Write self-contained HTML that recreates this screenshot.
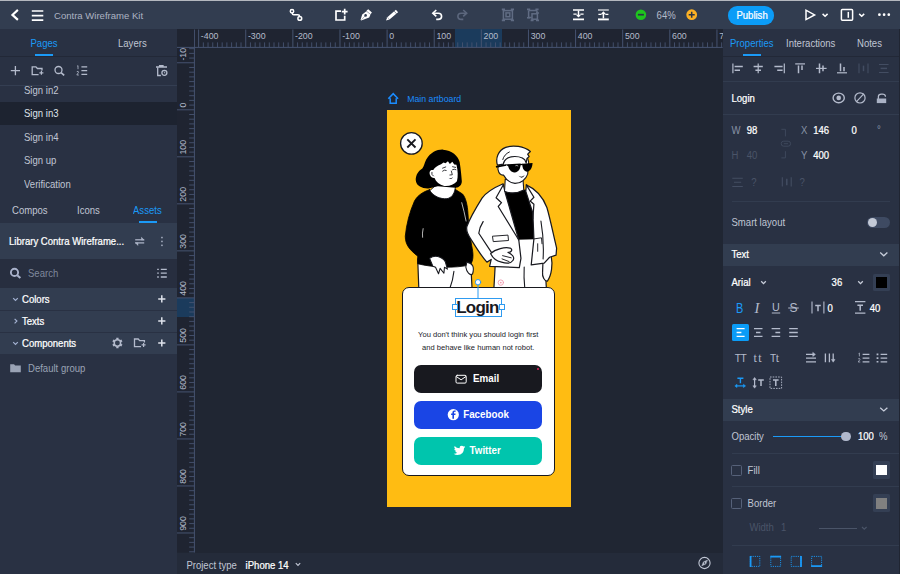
<!DOCTYPE html>
<html>
<head>
<meta charset="utf-8">
<title>Contra Wireframe Kit</title>
<style>
*{box-sizing:border-box;margin:0;padding:0}
html,body{width:900px;height:574px;overflow:hidden;background:#202633}
body{position:relative;font-family:"Liberation Sans",Arial,sans-serif;font-size:9.55px;color:#c0c6d4;line-height:1}
.abs{position:absolute}
.t{position:absolute;white-space:nowrap;line-height:12px;height:12px;margin-top:-5.25px;transform:scaleY(1.13);transform-origin:0 9.3px}
.w{color:#fff;-webkit-text-stroke:0.22px #fff}
.b{color:#1b9af7}
.dim{color:#4a5468}
.g{color:#8791a5}
svg{position:absolute;overflow:visible}
#top{left:0;top:0;width:900px;height:29px;background:#323d50;border-top:1px solid #b4b8bf}
#left{left:0;top:29px;width:177px;height:545px;background:#293143}
#right{left:722.7px;top:29px;width:177.3px;height:545px;background:#293143}
#canvas{left:177px;top:29px;width:545.7px;height:523.5px;background:#202633;overflow:hidden}
#bottom{left:177px;top:552.5px;width:545.7px;height:21.5px;background:#242b3a}
.hl{position:absolute;background:#323d50}
.sep{position:absolute;height:1px;background:#323c4f}
.sw{position:absolute;width:17.6px;height:17.4px;background:#343f54;border-radius:1.5px}
.sw i{position:absolute;left:3.6px;top:3.4px;width:10.8px;height:10.8px;display:block}
.cb{position:absolute;width:10.6px;height:10.6px;border:1px solid #566179;border-radius:1.5px}
/* artboard */
#ab{position:absolute;left:386.8px;top:109.6px;width:184.2px;height:397.2px;background:#ffbc12}
#card{position:absolute;left:401.5px;top:286.5px;width:153.5px;height:189px;background:#fff;border:1px solid #18191f;border-radius:7px}
.btn{position:absolute;left:413.6px;width:128.6px;height:27.8px;border-radius:7px}
.bt{position:absolute;white-space:nowrap;font-weight:700;color:#fff;font-size:9.8px;letter-spacing:0;line-height:12px;height:12px;margin-top:-5.6px;transform:scaleY(1.08);transform-origin:0 9.4px}
.desc{position:absolute;left:401.5px;width:153.5px;text-align:center;font-size:7.55px;letter-spacing:0.01px;color:#18191f;line-height:10px;height:10px;margin-top:-5px;white-space:nowrap}
.rl{font-family:"Liberation Sans",Arial,sans-serif;font-size:8.8px;fill:#b4bbcb}
</style>
</head>
<body>
<!-- ===== canvas ===== -->
<div id="canvas" class="abs"></div>
<!-- artboard -->
<span class="t" style="left:407.2px;top:98.4px;color:#1a8cff;font-size:8.75px">Main artboard</span>
<div id="ab"></div>
<!-- woman body: frame 333x574 maps to source (395,140)-(485,295) -->
<svg class="abs" style="left:395px;top:140px" width="90" height="155.1" viewBox="0 0 333 574" stroke-linecap="round" stroke-linejoin="round">
<path d="M84 440L280 450L285 548H88Z" fill="#fff" stroke="#18191f" stroke-width="4.5"/>
<path d="M218 486Q214 520 204 546" fill="none" stroke="#18191f" stroke-width="4"/>
<path d="M128 184C104 192 84 204 72 226C54 266 42 312 38 356C38 388 54 406 84 430L84 458C140 472 222 476 278 462C292 446 290 420 284 392C276 350 272 310 270 272C268 240 262 214 250 200L222 182C205 222 150 218 128 184Z" fill="#000" stroke="#000" stroke-width="3"/>
<path d="M247 232Q256 264 263 300" fill="none" stroke="#fff" stroke-width="2.6"/>
<path d="M104 328Q100 345 102 360" fill="none" stroke="#fff" stroke-width="2.6"/>
<path d="M128 438C146 424 172 430 186 450L194 478L183 471L181 493L167 475L161 495L150 471L140 467Z" fill="#fff" stroke="#18191f" stroke-width="4"/>
<path d="M266 452C287 456 295 470 287 496C277 503 265 490 262 470Z" fill="#fff" stroke="#18191f" stroke-width="4"/>
</svg>
<!-- woman head: frame 492x574 maps to source (415,145)-(475,215) -->
<svg class="abs" style="left:415px;top:145px" width="60" height="70" viewBox="0 0 492 574" stroke-linecap="round" stroke-linejoin="round">
<!-- neck -->
<path d="M180 320L122 374C150 420 210 446 262 440C300 434 322 400 328 362L336 330Z" fill="#fff" stroke="#18191f" stroke-width="8"/>
<!-- hair -->
<path d="M230 38C180 36 130 60 92 118C76 150 74 176 60 192C20 216 0 260 8 300C16 338 60 358 110 356L188 338L330 350C360 352 384 330 384 298C380 250 376 200 366 140C356 90 300 42 230 38Z" fill="#000"/>
<!-- face -->
<path d="M214 158C180 170 158 190 150 206C128 200 114 218 122 244C130 266 146 272 160 270C172 300 200 326 240 336C280 340 320 326 344 298C354 260 352 210 340 162L322 160L306 138L286 156L270 134L250 150L234 144Z" fill="#fff"/>
<g fill="none" stroke="#18191f" stroke-width="7">
<path d="M226 190L252 180M308 178L334 184"/>
<path d="M226 214Q240 200 256 208M308 202Q322 194 336 202"/>
<path d="M298 214L306 244L286 246"/>
<path d="M138 224Q132 244 150 254"/>
</g>
<path d="M274 268Q292 280 312 262Q298 294 274 268Z" fill="#18191f"/>
</svg>
<!-- man body: frame 444x574 maps to source (455,140)-(575,295) -->
<svg class="abs" style="left:455px;top:140px" width="120" height="155.1" viewBox="0 0 444 574" stroke-linecap="round" stroke-linejoin="round">
<!-- pants -->
<path d="M150 440L232 360L292 360L332 440L338 548H144Z" fill="#fff" stroke="#18191f" stroke-width="4.5"/>
<path d="M256 470Q254 510 258 546" fill="none" stroke="#18191f" stroke-width="4"/>
<!-- shirt -->
<path d="M176 190L268 184L296 270L298 366L226 368L204 290Z" fill="#000" stroke="#000" stroke-width="2"/>
<!-- right hand -->
<path d="M326 436L356 430C362 460 358 500 342 522C332 524 322 506 324 490Z" fill="#fff" stroke="#18191f" stroke-width="4.5"/>
<!-- right arm + right panel -->
<path d="M264 166C300 182 326 212 340 250C352 290 366 360 376 400L374 426L350 434L330 456L282 462L292 366L288 270L262 190Z" fill="#fff" stroke="#18191f" stroke-width="4.5"/>
<path d="M318 300Q330 370 326 440" fill="none" stroke="#18191f" stroke-width="4"/>
<!-- left arm + left panel -->
<path d="M178 162C150 174 120 188 100 215C75 255 52 298 44 320C40 336 46 348 58 366C78 398 96 428 118 452L134 442L128 468L238 472L244 438L236 370L186 196Z" fill="#fff" stroke="#18191f" stroke-width="4.5"/>
<!-- lapels -->
<path d="M180 164L152 214L172 232L160 246L236 370" fill="none" stroke="#18191f" stroke-width="4.5"/>
<path d="M264 166L292 212L278 226L292 238L288 290" fill="none" stroke="#18191f" stroke-width="4.5"/>
<!-- inner arm line -->
<path d="M104 302Q90 324 88 345L136 418" fill="none" stroke="#18191f" stroke-width="4.5"/>
<!-- pockets -->
<path d="M140 356L196 352L198 372L143 376Z" fill="#fff" stroke="#18191f" stroke-width="3.5"/>
<path d="M293 366L320 362L322 384M306 384V412" fill="none" stroke="#18191f" stroke-width="3.5"/>
<!-- left hand -->
<path d="M132 420C150 402 185 396 204 400C216 406 208 416 196 416C214 424 222 436 214 446C206 458 190 458 172 452C156 448 140 440 132 420Z" fill="#fff" stroke="#18191f" stroke-width="4.5"/>
<path d="M176 428L208 436M174 440L200 450" fill="none" stroke="#18191f" stroke-width="3.5"/>
</svg>
<!-- man head: frame 492x574 maps to source (485,140)-(545,210) -->
<svg class="abs" style="left:485px;top:140px" width="60" height="70" viewBox="0 0 492 574" stroke-linecap="round" stroke-linejoin="round">
<!-- neck -->
<path d="M166 320L160 420Q240 452 318 410L312 330Z" fill="#fff" stroke="#18191f" stroke-width="9"/>
<!-- face -->
<path d="M150 200C120 196 100 214 108 248C114 276 132 290 152 288C170 322 200 350 246 356C296 356 336 322 350 280L358 180L340 116L250 96L166 120Z" fill="#fff" stroke="#18191f" stroke-width="9"/>
<!-- hair -->
<path d="M102 206C84 150 108 84 170 60C230 38 320 52 372 94L350 116L362 136L344 152L338 188L326 162L306 148C270 130 215 132 186 148C162 164 152 180 150 198Z" fill="#fff" stroke="#18191f" stroke-width="10"/>
<path d="M146 160Q156 118 200 98" fill="none" stroke="#18191f" stroke-width="8"/>
<!-- sunglasses -->
<path d="M88 214L172 198L176 212L92 228Z" fill="#000"/>
<path d="M168 200L292 192C294 226 280 262 244 266C214 268 196 240 190 216Z" fill="#000"/>
<path d="M306 194L390 188C388 226 372 256 344 260C322 260 310 236 306 212Z" fill="#000"/>
<path d="M286 196L310 194L310 206L288 208Z" fill="#000"/>
<path d="M252 210Q262 204 270 212" fill="none" stroke="#fff" stroke-width="5"/>
<path d="M274 294Q300 310 326 288Q304 326 274 294Z" fill="#18191f"/>
</svg>

<div id="card"></div>
<span class="abs" style="left:456.2px;top:297.5px;font-weight:700;font-size:17px;letter-spacing:-0.75px;line-height:20px;color:#18191f;white-space:nowrap">Login</span>
<div class="desc" style="top:335px">You don't think you should login first</div>
<div class="desc" style="top:347.8px">and behave like human not robot.</div>
<div class="btn" style="top:365px;background:#18191f"></div>
<div class="btn" style="top:400.9px;background:#1a45e5"></div>
<div class="btn" style="top:436.5px;height:28.2px;background:#00c5ad"></div>
<span class="bt" style="left:473px;top:379px">Email</span>
<span class="bt" style="left:463.2px;top:414.7px">Facebook</span>
<span class="bt" style="left:469.5px;top:450.7px">Twitter</span>
<div class="abs" style="left:537px;top:367.8px;width:1.6px;height:1.8px;background:#e0245e;border-radius:1px"></div>
<!-- selection -->
<div class="abs" style="left:455.4px;top:298px;width:46.6px;height:18.6px;border:1px solid #2f9bf0"></div>
<div class="abs" style="left:452.3px;top:304.3px;width:5.4px;height:5.4px;background:#fff;border:1px solid #2f9bf0"></div>
<div class="abs" style="left:499.3px;top:304.3px;width:5.4px;height:5.4px;background:#fff;border:1px solid #2f9bf0"></div>
<div class="abs" style="left:177px;top:29px;width:545.7px;height:18.9px;background:#1f2431"></div>
<div class="abs" style="left:177px;top:47.9px;width:17.8px;height:504.6px;background:#1f2431"></div>
<div class="abs" style="left:455.4px;top:29px;width:46.2px;height:18.4px;background:#1b3b5c"></div>
<div class="abs" style="left:177px;top:298.2px;width:17.3px;height:18.8px;background:#1b3b5c"></div>
<svg class="abs" style="left:0;top:0" width="900" height="574" viewBox="0 0 900 574" shape-rendering="auto">
<path d="M194.8 47.4H722.7M194.4 29.5V552.5" stroke="#465370" stroke-width="1" fill="none"/>
<path d="M203.33 42.4V47.4M208.04 42.4V47.4M212.76 42.4V47.4M217.47 42.4V47.4M222.18 42.4V47.4M226.89 42.4V47.4M231.60 42.4V47.4M236.32 42.4V47.4M241.03 42.4V47.4M250.45 42.4V47.4M255.16 42.4V47.4M259.88 42.4V47.4M264.59 42.4V47.4M269.30 42.4V47.4M274.01 42.4V47.4M278.72 42.4V47.4M283.44 42.4V47.4M288.15 42.4V47.4M297.57 42.4V47.4M302.28 42.4V47.4M307.00 42.4V47.4M311.71 42.4V47.4M316.42 42.4V47.4M321.13 42.4V47.4M325.84 42.4V47.4M330.56 42.4V47.4M335.27 42.4V47.4M344.69 42.4V47.4M349.40 42.4V47.4M354.12 42.4V47.4M358.83 42.4V47.4M363.54 42.4V47.4M368.25 42.4V47.4M372.96 42.4V47.4M377.68 42.4V47.4M382.39 42.4V47.4M391.81 42.4V47.4M396.52 42.4V47.4M401.24 42.4V47.4M405.95 42.4V47.4M410.66 42.4V47.4M415.37 42.4V47.4M420.08 42.4V47.4M424.80 42.4V47.4M429.51 42.4V47.4M438.93 42.4V47.4M443.64 42.4V47.4M448.36 42.4V47.4M453.07 42.4V47.4M457.78 42.4V47.4M462.49 42.4V47.4M467.20 42.4V47.4M471.92 42.4V47.4M476.63 42.4V47.4M486.05 42.4V47.4M490.76 42.4V47.4M495.48 42.4V47.4M500.19 42.4V47.4M504.90 42.4V47.4M509.61 42.4V47.4M514.32 42.4V47.4M519.04 42.4V47.4M523.75 42.4V47.4M533.17 42.4V47.4M537.88 42.4V47.4M542.60 42.4V47.4M547.31 42.4V47.4M552.02 42.4V47.4M556.73 42.4V47.4M561.44 42.4V47.4M566.16 42.4V47.4M570.87 42.4V47.4M580.29 42.4V47.4M585.00 42.4V47.4M589.72 42.4V47.4M594.43 42.4V47.4M599.14 42.4V47.4M603.85 42.4V47.4M608.56 42.4V47.4M613.28 42.4V47.4M617.99 42.4V47.4M627.41 42.4V47.4M632.12 42.4V47.4M636.84 42.4V47.4M641.55 42.4V47.4M646.26 42.4V47.4M650.97 42.4V47.4M655.68 42.4V47.4M660.40 42.4V47.4M665.11 42.4V47.4M674.53 42.4V47.4M679.24 42.4V47.4M683.96 42.4V47.4M688.67 42.4V47.4M693.38 42.4V47.4M698.09 42.4V47.4M702.80 42.4V47.4M707.52 42.4V47.4M712.23 42.4V47.4M721.65 42.4V47.4M189.2 48.67H194.4M189.2 53.38H194.4M189.2 58.08H194.4M189.2 67.48H194.4M189.2 72.18H194.4M189.2 76.89H194.4M189.2 81.59H194.4M189.2 86.29H194.4M189.2 90.99H194.4M189.2 95.69H194.4M189.2 100.40H194.4M189.2 105.10H194.4M189.2 114.50H194.4M189.2 119.20H194.4M189.2 123.91H194.4M189.2 128.61H194.4M189.2 133.31H194.4M189.2 138.01H194.4M189.2 142.71H194.4M189.2 147.42H194.4M189.2 152.12H194.4M189.2 161.52H194.4M189.2 166.22H194.4M189.2 170.93H194.4M189.2 175.63H194.4M189.2 180.33H194.4M189.2 185.03H194.4M189.2 189.73H194.4M189.2 194.44H194.4M189.2 199.14H194.4M189.2 208.54H194.4M189.2 213.24H194.4M189.2 217.95H194.4M189.2 222.65H194.4M189.2 227.35H194.4M189.2 232.05H194.4M189.2 236.75H194.4M189.2 241.46H194.4M189.2 246.16H194.4M189.2 255.56H194.4M189.2 260.26H194.4M189.2 264.97H194.4M189.2 269.67H194.4M189.2 274.37H194.4M189.2 279.07H194.4M189.2 283.77H194.4M189.2 288.48H194.4M189.2 293.18H194.4M189.2 302.58H194.4M189.2 307.28H194.4M189.2 311.99H194.4M189.2 316.69H194.4M189.2 321.39H194.4M189.2 326.09H194.4M189.2 330.79H194.4M189.2 335.50H194.4M189.2 340.20H194.4M189.2 349.60H194.4M189.2 354.30H194.4M189.2 359.01H194.4M189.2 363.71H194.4M189.2 368.41H194.4M189.2 373.11H194.4M189.2 377.81H194.4M189.2 382.52H194.4M189.2 387.22H194.4M189.2 396.62H194.4M189.2 401.32H194.4M189.2 406.03H194.4M189.2 410.73H194.4M189.2 415.43H194.4M189.2 420.13H194.4M189.2 424.83H194.4M189.2 429.54H194.4M189.2 434.24H194.4M189.2 443.64H194.4M189.2 448.34H194.4M189.2 453.05H194.4M189.2 457.75H194.4M189.2 462.45H194.4M189.2 467.15H194.4M189.2 471.85H194.4M189.2 476.56H194.4M189.2 481.26H194.4M189.2 490.66H194.4M189.2 495.36H194.4M189.2 500.07H194.4M189.2 504.77H194.4M189.2 509.47H194.4M189.2 514.17H194.4M189.2 518.87H194.4M189.2 523.58H194.4M189.2 528.28H194.4M189.2 537.68H194.4M189.2 542.38H194.4M189.2 547.09H194.4M189.2 551.79H194.4" stroke="#465370" stroke-width="0.9" fill="none"/>
<path d="M198.62 29.5V47.4M245.74 29.5V47.4M292.86 29.5V47.4M339.98 29.5V47.4M387.10 29.5V47.4M434.22 29.5V47.4M481.34 29.5V47.4M528.46 29.5V47.4M575.58 29.5V47.4M622.70 29.5V47.4M669.82 29.5V47.4M716.94 29.5V47.4M177 62.78H194.4M177 109.80H194.4M177 156.82H194.4M177 203.84H194.4M177 250.86H194.4M177 297.88H194.4M177 344.90H194.4M177 391.92H194.4M177 438.94H194.4M177 485.96H194.4M177 532.98H194.4" stroke="#465370" stroke-width="1" fill="none"/>
<text class="rl" x="200.82" y="39">-400</text>
<text class="rl" x="247.94" y="39">-300</text>
<text class="rl" x="295.06" y="39">-200</text>
<text class="rl" x="342.18" y="39">-100</text>
<text class="rl" x="389.30" y="39">0</text>
<text class="rl" x="436.42" y="39">100</text>
<text class="rl" x="483.54" y="39">200</text>
<text class="rl" x="530.66" y="39">300</text>
<text class="rl" x="577.78" y="39">400</text>
<text class="rl" x="624.90" y="39">500</text>
<text class="rl" x="672.02" y="39">600</text>
<text class="rl" x="719.14" y="39">700</text>
<text class="rl" transform="translate(185.9 60.58) rotate(-90)">-100</text>
<text class="rl" transform="translate(185.9 107.60) rotate(-90)">0</text>
<text class="rl" transform="translate(185.9 154.62) rotate(-90)">100</text>
<text class="rl" transform="translate(185.9 201.64) rotate(-90)">200</text>
<text class="rl" transform="translate(185.9 248.66) rotate(-90)">300</text>
<text class="rl" transform="translate(185.9 295.68) rotate(-90)">400</text>
<text class="rl" transform="translate(185.9 342.70) rotate(-90)">500</text>
<text class="rl" transform="translate(185.9 389.72) rotate(-90)">600</text>
<text class="rl" transform="translate(185.9 436.74) rotate(-90)">700</text>
<text class="rl" transform="translate(185.9 483.76) rotate(-90)">800</text>
<text class="rl" transform="translate(185.9 530.78) rotate(-90)">900</text>
<rect x="177" y="29" width="17" height="18.9" fill="#1f2431"/>
<path d="M177 47.4H194.8" stroke="#465370" stroke-width="1"/>
</svg>
<!-- ===== top bar ===== -->
<div id="top" class="abs"></div>
<span class="t" style="left:54px;top:15.6px;color:#adb4c3;transform:scaleY(1.04)">Contra Wireframe Kit</span>
<div class="abs" style="left:727.6px;top:6.4px;width:46.6px;height:18.2px;border-radius:9.1px;background:#0b9cf7"></div>
<span class="t w" style="left:736.4px;top:15.2px">Publish</span>
<span class="t" style="left:656.6px;top:15px;color:#b4bbc9">64%</span>
<!-- ===== left panel ===== -->
<div id="left" class="abs"></div>
<div class="abs" style="left:0;top:56.4px;width:177px;height:1px;background:#222837"></div>
<span class="t b" style="left:30.5px;top:43.2px">Pages</span>
<div class="abs" style="left:35px;top:54px;width:18px;height:1.7px;background:#1b9af7"></div>
<span class="t" style="left:118px;top:43.2px">Layers</span>
<div class="abs" style="left:0;top:85px;width:177px;height:1px;background:#343e52"></div>
<div class="abs" style="left:0;top:101.6px;width:177px;height:23px;background:#1d2330"></div>
<span class="t" style="left:24px;top:89.8px">Sign in2</span>
<span class="t" style="left:24px;top:113.3px;color:#dfe3ea">Sign in3</span>
<span class="t" style="left:24px;top:137px">Sign in4</span>
<span class="t" style="left:24px;top:160.6px">Sign up</span>
<span class="t" style="left:24px;top:184.2px">Verification</span>
<span class="t" style="left:12px;top:210.2px">Compos</span>
<span class="t" style="left:77px;top:210.2px">Icons</span>
<span class="t b" style="left:133px;top:210.2px">Assets</span>
<div class="abs" style="left:139px;top:221px;width:17.5px;height:1.7px;background:#1b9af7"></div>
<div class="hl" style="left:0;top:223px;width:177px;height:35.7px"></div>
<span class="t w" style="left:9px;top:240.8px">Library Contra Wireframe...</span>
<div class="abs" style="left:0;top:258.7px;width:177px;height:29.3px;background:#272e3f"></div>
<span class="t" style="left:28px;top:272.8px;color:#7f889c">Search</span>
<div class="hl" style="left:0;top:288px;width:177px;height:22.2px"></div>
<div class="hl" style="left:0;top:310.9px;width:177px;height:21.3px"></div>
<div class="hl" style="left:0;top:332.9px;width:177px;height:21.6px"></div>
<span class="t w" style="left:22px;top:299.2px">Colors</span>
<span class="t w" style="left:22px;top:321.2px">Texts</span>
<span class="t w" style="left:22px;top:343.2px">Components</span>
<span class="t" style="left:28px;top:368.2px;color:#9aa3b5">Default group</span>
<!-- ===== bottom bar ===== -->
<div id="bottom" class="abs"></div>
<span class="t" style="left:186.4px;top:564.8px">Project type</span>
<span class="t w" style="left:245.6px;top:564.8px">iPhone 14</span>
<!-- ===== right panel ===== -->
<div id="right" class="abs"></div>
<div class="abs" style="left:722.7px;top:56.4px;width:177.3px;height:1px;background:#222837"></div>
<span class="t b" style="left:730px;top:43.2px">Properties</span>
<div class="abs" style="left:743px;top:54px;width:18px;height:1.7px;background:#1b9af7"></div>
<span class="t" style="left:786px;top:43.2px">Interactions</span>
<span class="t" style="left:857px;top:43.2px">Notes</span>
<div class="sep" style="left:722.7px;top:80.8px;width:177.3px"></div>
<span class="t w" style="left:731.5px;top:97.8px">Login</span>
<div class="sep" style="left:722.7px;top:113.6px;width:177.3px"></div>
<span class="t g" style="left:731.5px;top:130.4px">W</span>
<span class="t w" style="left:746.7px;top:130.4px">98</span>
<span class="t g" style="left:801px;top:130.4px">X</span>
<span class="t w" style="left:813.2px;top:130.4px">146</span>
<span class="t w" style="left:851.4px;top:130.4px">0</span>
<span class="t g" style="left:877px;top:129.6px">°</span>
<span class="t dim" style="left:731.5px;top:155.7px">H</span>
<span class="t dim" style="left:746.7px;top:155.7px">40</span>
<span class="t g" style="left:801px;top:155.7px">Y</span>
<span class="t w" style="left:813.2px;top:155.7px">400</span>
<span class="t dim" style="left:751.3px;top:182.4px">?</span>
<span class="t dim" style="left:799.6px;top:182.4px">?</span>
<div class="sep" style="left:731.8px;top:201.4px;width:158.2px"></div>
<span class="t" style="left:731.5px;top:222.2px">Smart layout</span>
<div class="abs" style="left:866.6px;top:216.5px;width:23.7px;height:11.6px;border-radius:6px;background:#3e4a62"></div>
<div class="abs" style="left:867.9px;top:217.8px;width:9px;height:9px;border-radius:5px;background:#c3c9d6"></div>
<div class="hl" style="left:722.7px;top:243.6px;width:177.3px;height:22.6px"></div>
<span class="t w" style="left:731.5px;top:254.6px">Text</span>
<span class="t w" style="left:731.5px;top:282.2px">Arial</span>
<span class="t w" style="left:831.6px;top:282.2px">36</span>
<div class="sw" style="left:872.7px;top:273.8px"><i style="background:#000"></i></div>
<span class="t w" style="left:827.6px;top:307.8px">0</span>
<span class="t w" style="left:869.8px;top:307.8px">40</span>
<div class="abs" style="left:731.8px;top:323.7px;width:17.5px;height:17.5px;background:#0b9cf7;border-radius:1.5px"></div>
<div class="hl" style="left:722.7px;top:398.6px;width:177.3px;height:22.2px"></div>
<span class="t w" style="left:731.5px;top:409.6px">Style</span>
<span class="t" style="left:731.5px;top:436.6px">Opacity</span>
<div class="abs" style="left:772.5px;top:435.5px;width:73px;height:1.5px;background:#1b9af7"></div>
<div class="abs" style="left:841.4px;top:431.6px;width:9.2px;height:9.2px;border-radius:5px;background:#b0b8cc"></div>
<span class="t w" style="left:858px;top:436.6px">100</span>
<span class="t" style="left:879px;top:436.6px">%</span>
<div class="sep" style="left:731.8px;top:452.8px;width:168.2px"></div>
<div class="cb" style="left:731.2px;top:465px"></div>
<span class="t" style="left:747.6px;top:470.2px">Fill</span>
<div class="sw" style="left:872.7px;top:461.2px"><i style="background:#fff"></i></div>
<div class="sep" style="left:731.8px;top:486.4px;width:168.2px"></div>
<div class="cb" style="left:731.2px;top:498px"></div>
<span class="t" style="left:747.6px;top:503.2px">Border</span>
<div class="sw" style="left:872.7px;top:494.4px"><i style="background:#808080"></i></div>
<span class="t dim" style="left:749.4px;top:527.7px">Width</span>
<span class="t dim" style="left:781px;top:527.7px">1</span>
<div class="abs" style="left:819px;top:527.7px;width:38.3px;height:1px;background:#4a5468"></div>
<div class="sep" style="left:731.8px;top:544.6px;width:168.2px"></div>
<div class="abs" style="left:898.8px;top:29px;width:1.2px;height:545px;background:#202532"></div>
<svg class="abs" style="left:0;top:0" width="900" height="574" viewBox="0 0 900 574" fill="none" stroke-linecap="round" stroke-linejoin="round">
<!-- top bar: back, hamburger -->
<g stroke="#fff" stroke-width="1.7" stroke-linecap="butt" stroke-linejoin="miter">
<path d="M17.9 9.9L12.4 14.9L17.9 19.9" stroke-width="2.1"/>
<path d="M31.8 11H43.3M31.8 15.6H43.3M31.8 20.1H43.3"/>
</g>
<!-- connection -->
<g stroke="#fff" stroke-width="1.5">
<circle cx="292" cy="11.2" r="1.7"/><circle cx="299.8" cy="18.4" r="1.9"/>
<path d="M292.3 13V13.6Q292.3 14.8 293.8 14.8H297.8Q299.6 14.8 299.6 16.4"/>
</g>
<!-- add artboard -->
<g stroke="#fff" stroke-width="1.7" stroke-linecap="butt" stroke-linejoin="miter">
<path d="M341 11.2H336V20H344.7V15.8"/>
<path d="M344.7 8.8V14.6M341.8 11.7H347.6"/>
</g>
<!-- pen nib -->
<g stroke="none">
<path fill="#fff" d="M368.3 9.3L371.9 12.5L370.8 13.9L369.2 17.5L361.1 20.6L360.6 19.7L362.2 14.4L366.1 11.4L366.9 10.3Z"/>
<circle cx="365.6" cy="15.4" r="1.3" fill="#323d50"/>
<path d="M364.7 16.3L361.8 19.4" stroke="#323d50" stroke-width="0.4"/>
<path d="M366.4 11.1L370.6 14.4" stroke="#323d50" stroke-width="0.45"/>
</g>
<!-- pencil -->
<g stroke="none">
<path fill="#fff" d="M386 20.5L387.3 17.2L395.9 9.8L398.1 12.2L389.5 19.6Z"/>
<path d="M394.2 11.2L396.4 13.6" stroke="#323d50" stroke-width="0.55"/>
<path d="M387.6 17.4L389.3 19.3" stroke="#323d50" stroke-width="0.35"/>
</g>
<!-- undo / redo -->
<g stroke="#fff" stroke-width="1.6" stroke-linecap="butt">
<path d="M436.3 10L432.8 13.2L436.3 16.4" stroke-linejoin="miter"/>
<path d="M433.2 13.2H438.2Q441.6 13.2 441.6 16.3T438.2 19.4H436.2"/>
</g>
<g stroke="#5c677d" stroke-width="1.6" stroke-linecap="butt">
<path d="M463.2 10L466.7 13.2L463.2 16.4" stroke-linejoin="miter"/>
<path d="M466.3 13.2H461.3Q457.9 13.2 457.9 16.3T461.3 19.4H463.3"/>
</g>
<!-- group / ungroup (dim) -->
<g stroke="#606c83" stroke-width="1.5" stroke-linecap="butt" stroke-linejoin="miter">
<rect x="503.4" y="10.6" width="9" height="8.6"/>
<rect x="506" y="12.9" width="3.8" height="3.8"/>
<path d="M501.8 9.4H505M510.8 9.4H514M501.8 20.4H505M510.8 20.4H514M503.4 9V10.4M512.4 9V10.4" stroke-width="1.6"/>
<path d="M528.6 10.6H537M528.6 10.6V17.4H531.6M537 10.6V13" />
<rect x="532" y="13.8" width="5.4" height="5.4"/>
<path d="M527 9.4H530.2M535.4 9.4H538.6M527 17.8H530.2M530.6 20.4H533.6M536 20.4H539M536 13H539" stroke-width="1.6"/>
</g>
<!-- layer order icons -->
<g stroke="#fff" stroke-width="1.5" stroke-linecap="butt" stroke-linejoin="miter">
<path d="M573 10H584M573 19.4H584" stroke-width="1.7"/>
<path d="M573.4 14.2H576.6M580.4 14.2H583.6" stroke-width="1.2"/>
<path d="M578.5 10.6V16.4"/>
<path d="M575.9 14.8L578.5 17.6L581.1 14.8Z" fill="#fff" stroke="none"/>
<path d="M598 10H608.8" stroke-width="1.1"/>
<path d="M598 19.4H608.8" stroke-width="1.9"/>
<path d="M598.4 14.4H601.4M605.4 14.4H608.4" stroke-width="1.2"/>
<path d="M603.4 12.6V18.4"/>
<path d="M600.8 14.2L603.4 11.2L606 14.2Z" fill="#fff" stroke="none"/>
</g>
<!-- zoom circles -->
<circle cx="640.9" cy="14.7" r="5.3" fill="#1ec41e"/>
<path d="M637.9 14.7H643.9" stroke="#2b3546" stroke-width="1.7" stroke-linecap="butt"/>
<circle cx="691.7" cy="14.7" r="5.4" fill="#fbb024"/>
<path d="M688.7 14.7H694.7M691.7 11.7V17.7" stroke="#2b3546" stroke-width="1.5" stroke-linecap="butt"/>
<!-- play, panel, dots -->
<g stroke="#fff" stroke-width="1.5" stroke-linejoin="miter" stroke-linecap="butt">
<path d="M806 10.2V19.6L814.6 14.9Z"/>
<path d="M822.6 13.9L825.1 16.3L827.6 13.9"/>
<rect x="841.4" y="9.6" width="11.2" height="10.6" rx="1"/>
<path d="M848.3 11.9V17.8"/>
<path d="M859.2 13.9L861.7 16.3L864.2 13.9"/>
</g>
<g fill="#fff"><circle cx="879.4" cy="14.7" r="1.35"/><circle cx="884.1" cy="14.7" r="1.35"/><circle cx="888.8" cy="14.7" r="1.35"/></g>

<!-- pages toolbar -->
<g stroke="#b4bbcc" stroke-width="1.3" stroke-linecap="butt" stroke-linejoin="miter">
<path d="M10.8 70.6H20M15.4 66V75.2"/>
<path d="M38.6 74.7H32.2V66.9H35.9L37.4 68.5H42V70.6"/>
<path d="M41.4 70.8V74.8M39.4 72.8H43.4" stroke-width="1.2"/>
<circle cx="58.5" cy="70" r="3.5"/>
<path d="M61.1 72.6L64.2 75.4" stroke-width="1.6"/>
<path d="M81.4 66.8H87.2M81.4 70.6H87.2M81.4 74.4H87.2"/>
<path d="M77.2 66.2L78 65.6V69.2M76.8 71.6Q78.6 70.8 78.6 72.2L76.8 75H78.9" stroke-width="0.8"/>
<path d="M156 67H167M159.6 67V65.7H163V67"/>
<path d="M157.7 67.6V75.5H160.9"/>
<circle cx="164.4" cy="72.8" r="2.5"/>
<path d="M164.4 71.6V73H165.4" stroke-width="0.8"/>
</g>
<!-- library row -->
<g stroke="#aab2c5" stroke-width="1.3" stroke-linecap="butt" stroke-linejoin="miter">
<path d="M135.2 239.8H144.2"/><path d="M141.2 236.8L144.6 240.2H141.2Z" fill="#aab2c5" stroke="none"/>
<path d="M144.2 242.9H135.2"/><path d="M138.2 245.9L134.8 242.5H138.2Z" fill="#aab2c5" stroke="none"/>
</g>
<g fill="#aab2c5"><rect x="161.2" y="236.8" width="1.5" height="1.5"/><rect x="161.2" y="240.7" width="1.5" height="1.5"/><rect x="161.2" y="244.6" width="1.5" height="1.5"/></g>
<!-- search row -->
<g stroke="#a9b2cb" stroke-width="1.9" stroke-linecap="butt">
<circle cx="14.5" cy="272.4" r="3.6"/>
<path d="M17.2 275.2L20.4 278" stroke-width="2.1"/>
</g>
<g stroke="#b4bbcc" stroke-width="1.3" stroke-linecap="butt">
<path d="M160.8 269.4H166.8M160.8 273.2H166.8M160.8 277H166.8"/>
<path d="M157.2 269.4H158.8M157.2 273.2H158.8M157.2 277H158.8"/>
</g>
<!-- asset group rows -->
<g stroke="#a4b2d2" stroke-width="1.2" stroke-linecap="butt" stroke-linejoin="miter">
<path d="M13.2 298.1L15.5 300.4L17.8 298.1"/>
<path d="M14.6 318.8L16.9 321.1L14.6 323.4"/>
<path d="M13.2 342.1L15.5 344.4L17.8 342.1"/>
</g>
<g stroke="#dfe3ec" stroke-width="1.5" stroke-linecap="butt">
<path d="M158.2 298.9H165.4M161.8 295.3V302.5"/>
<path d="M158.2 320.9H165.4M161.8 317.3V324.5"/>
<path d="M158.2 343H165.4M161.8 339.4V346.6"/>
</g>
<g stroke="#b4bbcc" stroke-width="1.3" stroke-linecap="butt" stroke-linejoin="miter">
<circle cx="117.4" cy="343" r="3.2" stroke-width="1.5"/>
<path d="M117.4 337.8V339.6M117.4 346.4V348.2M112.9 340.4L114.5 341.3M120.3 344.7L121.9 345.6M112.9 345.6L114.5 344.7M120.3 341.3L121.9 340.4" stroke-width="2.3"/>
<path d="M141 346.6H134.5V339H138.2L139.7 340.6H144.4V342.6"/>
<path d="M143.6 342.9V346.9M141.6 344.9H145.6" stroke-width="1.2"/>
</g>
<!-- default group folder -->
<path d="M10.2 364.2H14L15.2 365.6H20.8V372.2H10.2Z" fill="#9aa3b5"/>
<!-- bottom bar -->
<path d="M295.8 563.2L298 565.4L300.2 563.2" stroke="#c0c6d4" stroke-width="1.2" stroke-linecap="butt" stroke-linejoin="miter"/>
<g stroke="#c0c6d4" stroke-width="1.1">
<circle cx="704.5" cy="563" r="5.6"/>
<path d="M707.2 560.2L703.4 561.9L701.8 565.8L705.6 564.1Z" fill="#c0c6d4" stroke-width="0.5"/>
</g>
<circle cx="704.5" cy="563" r="0.7" fill="#242b3a"/>

<!-- right: align icons -->
<g stroke="#b4bbcc" stroke-width="1.2" stroke-linecap="butt">
<path d="M732.9 63.5V73.2"/><path d="M734.6 66.5H742.8M734.6 70.3H740" stroke-width="1.5"/>
<path d="M758.2 63.5V73.2"/><path d="M753.6 66.5H762.8M755.4 70.3H761" stroke-width="1.5"/>
<path d="M784.3 63.5V73.2"/><path d="M774.4 66.5H782.6M777.2 70.3H782.6" stroke-width="1.5"/>
<path d="M795.2 63.9H805"/><path d="M798.5 65.6V73.2M802 65.6V70" stroke-width="1.5"/>
<path d="M816 68.4H826.6"/><path d="M819.5 63.5V73.3M823 65.6V71.2" stroke-width="1.5"/>
<path d="M837 72.8H847"/><path d="M840.5 63.5V71.3M844 67V71.3" stroke-width="1.5"/>
</g>
<g stroke="#434d62" stroke-width="1.1" stroke-linecap="butt">
<path d="M859 63.5V73.2M868 63.5V73.2"/><path d="M863.5 65.6V71.2" stroke-width="1.5"/>
<path d="M879 64.5H888.6M879 72.5H888.6"/><path d="M880.6 68.4H887" stroke-width="1.5"/>
</g>
<!-- login row icons -->
<g stroke="#b4bbcc" stroke-width="1.2">
<ellipse cx="838.7" cy="97.9" rx="5.6" ry="4.8" stroke-width="1.4"/>
<circle cx="838.7" cy="97.9" r="2.3" fill="#b4bbcc" stroke="none"/>
<circle cx="860" cy="97.9" r="5.1"/>
<path d="M856.5 101.6L863.5 94.2"/>
<path d="M878.4 98.4V96.6Q878.4 94.2 881.4 94.2H882.4Q885.2 94.2 885.4 96.2" stroke-width="1.3"/>
<rect x="876.8" y="98.5" width="9.4" height="4.6" fill="#aab2c5" stroke="none"/>
</g>
<!-- W/H link -->
<g stroke="#3e485c" stroke-width="1" stroke-linecap="butt" stroke-linejoin="miter">
<path d="M781.4 129.3H785.4V136.4M785.4 151.2V157.9H781.4"/>
<rect x="781.2" y="141.2" width="9.4" height="5" rx="2.5"/>
<path d="M783.8 143.7H788"/>
</g>
<!-- spacing icons (dim) -->
<g stroke="#434d62" stroke-width="1.1" stroke-linecap="butt">
<path d="M732.3 178.3H742.8M734 182.2H741.2M732.3 186.5H742.8"/>
<path d="M782.3 177.3V186.6M791.2 177.3V186.6"/><path d="M786.8 178.8V185.2" stroke-width="1.5"/>
</g>
<!-- text header chevron etc -->
<g stroke="#c8cedb" stroke-width="1.3" stroke-linecap="butt" stroke-linejoin="miter">
<path d="M880.2 252.6L883.8 255.8L887.4 252.6"/>
<path d="M880.2 407.8L883.8 411L887.4 407.8"/>
<path d="M761.2 281.2L763.5 283.6L765.8 281.2"/>
<path d="M858.2 281.2L860.5 283.6L862.8 281.2"/>
</g>
<path d="M862 527L864.3 529.2L866.6 527" stroke="#4a5468" stroke-width="1.2" stroke-linecap="butt" stroke-linejoin="miter"/>
<!-- B I U S -->
<text transform="translate(735.9 313.1) scale(0.74 1)" font-family="Liberation Sans,Arial,sans-serif" font-size="14.8" fill="#1b9af7" stroke="none">B</text>
<text x="754.6" y="313.1" font-family="Liberation Serif,serif" font-style="italic" font-size="14.6" fill="#b4bbcc" stroke="none">I</text>
<text x="771.9" y="310.9" font-family="Liberation Sans,Arial,sans-serif" font-size="10.8" fill="#b4bbcc" stroke="none">U</text>
<path d="M772.2 313H779.8" stroke="#b4bbcc" stroke-width="1"/>
<text x="789.4" y="312.1" font-family="Liberation Sans,Arial,sans-serif" font-size="12" fill="#b4bbcc" stroke="none">S</text>
<path d="M788.6 308H798.4" stroke="#b4bbcc" stroke-width="1"/>
<g stroke="#b4bbcc" stroke-width="1.1" stroke-linecap="butt">
<path d="M812 301.6V313.5M823.9 301.6V313.5"/>
<path d="M815.2 305.4H820.8M818 305.4V311.2" stroke-width="1.5"/>
<path d="M855 301.6H865.4M855 313.1H865.4"/>
<path d="M857.4 305.2H863M860.2 305.2V310.8" stroke-width="1.5"/>
</g>
<!-- text align icons -->
<g stroke="#fff" stroke-width="1.4" stroke-linecap="butt">
<path d="M736.6 328.6H744.6M736.6 332.5H741.4M736.6 336.4H744.6"/>
</g>
<g stroke="#b4bbcc" stroke-width="1.3" stroke-linecap="butt">
<path d="M754 328.6H762.5M756 332.5H760.5M754 336.4H762.5"/>
<path d="M771.6 328.6H780.2M775.4 332.5H780.2M771.6 336.4H780.2"/>
<path d="M789.2 328.6H797.8M789.2 332.5H797.8M789.2 336.4H797.8"/>
</g>
<!-- TT tt Tt -->
<g font-family="Liberation Serif,serif" font-size="11" fill="#b4bbcc" stroke="none">
<text x="734.7" y="361.7" font-family="Liberation Sans,Arial,sans-serif" font-size="10.2" letter-spacing="-0.5">TT</text>
<text x="753.4" y="361.8" letter-spacing="1.6" font-size="12">tt</text>
<text x="770" y="361.7" font-family="Liberation Sans,Arial,sans-serif" font-size="10.2">T<tspan font-family="Liberation Serif,serif" font-size="12" dx="-0.6">t</tspan></text>
</g>
<g stroke="#b4bbcc" stroke-width="1.3" stroke-linecap="butt" stroke-linejoin="miter">
<path d="M806 354.4H813.6M806 358.2H816M806 361.9H816"/>
<path d="M812.8 352.4L815.4 354.4L812.8 356.4Z" fill="#b4bbcc" stroke-width="0.6"/>
<path d="M825.4 353.4V362.2M829.4 353.4V362.2"/>
<path d="M833.2 353.4V360"/><path d="M831.4 359.4L833.2 362.2L835 359.4Z" fill="#b4bbcc" stroke-width="0.5"/>
<path d="M862.6 354.4H869.4M862.6 358.1H869.4M862.6 361.8H869.4"/>
<path d="M858.6 353.6L859.4 353V356.4M858.2 358.8Q860 358 860 359.4L858.2 362H860.3" stroke-width="0.75"/>
<path d="M880.6 354.4H887.2M880.6 358.1H887.2M880.6 361.8H887.2"/>
<path d="M876.6 354.4H878.4M876.6 358.1H878.4M876.6 361.8H878.4" stroke-width="1.6"/>
</g>
<!-- text box mode icons -->
<g stroke="#1b9af7" stroke-width="1.2" stroke-linecap="butt" stroke-linejoin="miter">
<path d="M737.4 378.3H743.4M740.4 378.3V383.3" stroke-width="1.4"/>
<path d="M736 385.9H744.4"/>
<path d="M737 384.2L734.8 385.9L737 387.6Z" fill="#1b9af7" stroke-width="0.5"/>
<path d="M743.4 384.2L745.6 385.9L743.4 387.6Z" fill="#1b9af7" stroke-width="0.5"/>
</g>
<g stroke="#b4bbcc" stroke-width="1.2" stroke-linecap="butt" stroke-linejoin="miter">
<path d="M754.6 378.8V386.8"/>
<path d="M752.9 379.8L754.6 377.4L756.3 379.8Z" fill="#b4bbcc" stroke-width="0.5"/>
<path d="M752.9 385.8L754.6 388.2L756.3 385.8Z" fill="#b4bbcc" stroke-width="0.5"/>
<path d="M758.2 379.9H763.8M761 379.9V386" stroke-width="1.5"/>
<rect x="770" y="377" width="11.6" height="11.4" stroke-width="0.9" stroke-dasharray="1.6 1.1"/>
<path d="M773 379.9H778.6M775.8 379.9V386" stroke-width="1.5"/>
</g>
<!-- border side icons -->
<g stroke="#1b9af7" stroke-width="0.9" stroke-linecap="butt" stroke-dasharray="1.2 1">
<rect x="750.4" y="556.4" width="9.4" height="10"/>
<rect x="770.8" y="556.4" width="9.8" height="10"/>
<rect x="791.2" y="556.4" width="9.8" height="10"/>
<rect x="811.6" y="556.4" width="10" height="10"/>
</g>
<g stroke="#1b9af7" stroke-width="1.8" stroke-linecap="butt">
<path d="M750.6 555.9V566.9M770.3 556.6H781.1M801 555.9V566.9M811.1 566.2H822.1"/>
</g>

<!-- home icon + close -->
<path d="M388.3 98.8L393.2 93.7L398.1 98.8M390.2 98.2V103.2H396.2V98.2" stroke="#1a8cff" stroke-width="1.5" stroke-linecap="butt" stroke-linejoin="miter"/>
<circle cx="411.4" cy="143.4" r="10.8" fill="#fff" stroke="#18191f" stroke-width="1.3"/>
<path d="M407.3 139.4L415.5 147.5M415.5 139.4L407.3 147.5" stroke="#18191f" stroke-width="1.9" stroke-linecap="butt"/>
<!-- rotate handle + pink -->
<path d="M478 284.6V298" stroke="#2f9bf0" stroke-width="1"/>
<circle cx="478" cy="282.2" r="2.7" fill="#fff" stroke="#2f9bf0" stroke-width="1"/>
<circle cx="500.8" cy="282.6" r="2.7" fill="#fff" stroke="#f19cb0" stroke-width="0.9"/>
<circle cx="500.8" cy="282.6" r="0.9" fill="#f19cb0"/>
<!-- button icons -->
<rect x="456" y="375.3" width="10.2" height="7.8" rx="1.2" stroke="#fff" stroke-width="1"/>
<path d="M456.4 376.6L461.1 379.8L465.8 376.6" stroke="#fff" stroke-width="1"/>
<circle cx="453.3" cy="414.7" r="5.6" fill="#fff"/>
<path d="M454 418.8V414.9H455.4L455.6 413.4H454V412.5Q454 411.8 454.8 411.8H455.7V410.5Q455 410.4 454.3 410.4Q452.4 410.4 452.4 412.4V413.4H451.1V414.9H452.4V418.8Z" fill="#1a45e5"/>
<path d="M465.2 446.9Q464.7 447.1 464 447.2Q464.7 446.8 465 446Q464.3 446.4 463.5 446.6Q462.8 445.8 461.8 445.8Q459.4 445.8 459.5 448.2Q456.5 448 454.6 445.9Q453.7 447.6 455.3 449Q454.7 449 454.2 448.7Q454.3 450.5 456.2 451Q455.7 451.2 455.1 451.1Q455.6 452.6 457.3 452.7Q455.8 453.9 453.6 453.7Q455.3 455 457.5 455Q463.9 454.8 464 448.2Q464.7 447.7 465.2 446.9Z" fill="#fff"/>
</svg>

</body>
</html>
